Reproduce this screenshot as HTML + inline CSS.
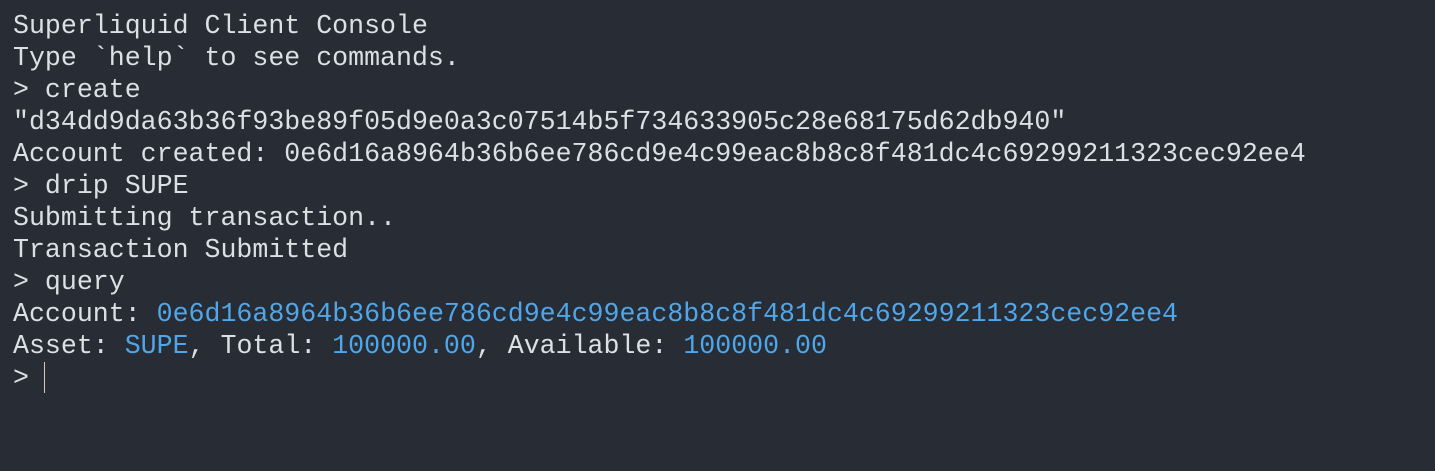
<!DOCTYPE html><html><head><style>
html,body{margin:0;width:1435px;height:471px;background:#282c34;overflow:hidden}
pre{margin:0;position:absolute;left:13px;top:10px;font-family:"Liberation Mono",monospace;font-size:26.6px;line-height:32px;color:#dcdfe4}
b{font-weight:normal;color:#4fa6e8}
.c{display:inline-block;width:1px;height:31px;background:#d8c8b0;vertical-align:-8px;margin-left:-1px}
</style></head><body><pre>Superliquid Client Console
Type `help` to see commands.
&gt; create
"d34dd9da63b36f93be89f05d9e0a3c07514b5f734633905c28e68175d62db940"
Account created: 0e6d16a8964b36b6ee786cd9e4c99eac8b8c8f481dc4c69299211323cec92ee4
&gt; drip SUPE
Submitting transaction..
Transaction Submitted
&gt; query
Account: <b>0e6d16a8964b36b6ee786cd9e4c99eac8b8c8f481dc4c69299211323cec92ee4</b>
Asset: <b>SUPE</b>, Total: <b>100000.00</b>, Available: <b>100000.00</b>
&gt; <span class="c"></span></pre></body></html>
